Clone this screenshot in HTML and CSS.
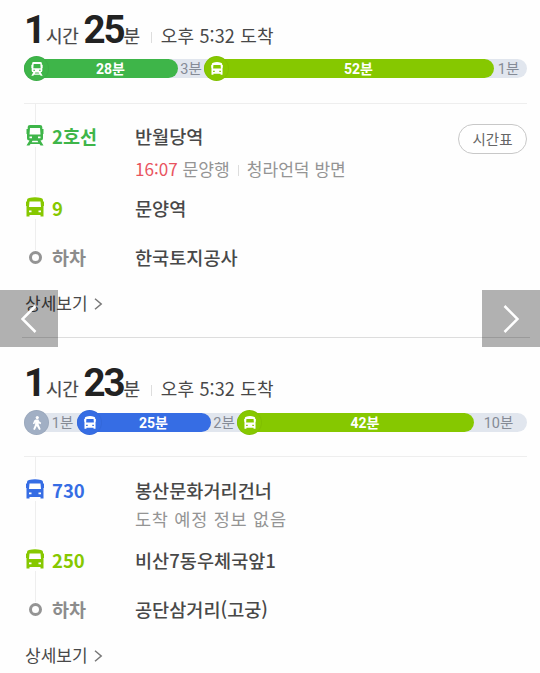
FILE: index.html
```html
<!DOCTYPE html>
<html lang="ko">
<head>
<meta charset="utf-8">
<title>대중교통 길찾기</title>
<link rel="stylesheet" href="styles.css">
</head>
<body>
<svg class="defs" aria-hidden="true">
  <symbol id="bus" viewBox="0 0 18 20"><path fill-rule="evenodd" d="M3 1Q9-.7 15 1Q17 1.500 17 3V4.500H18V9H17.500V19.500H14.500V18H3.500V19.500H.5V9H0V4.500H1V3Q1 1.500 3 1ZM3.500 4.500L3 10H15L14.500 4.500ZM3 13.500V15.300H5.500V13.500ZM12.500 13.500V15.300H15V13.500Z"/></symbol>
  <symbol id="train" viewBox="0 0 18 21"><path fill-rule="evenodd" d="M4 0H14Q16.300 0 16.300 2V4H17.500V9H17V13Q17 15.500 14.500 15.500L17.500 20.500H14.500L13.500 19H4.500L3.500 20.500H.5L3.500 15.500Q1 15.500 1 13V9H.5V4H1.700V2Q1.700 0 4 0ZM4 3L3.500 9.500H14.500L14 3ZM3.500 11.500V13.300H6V11.500ZM12 11.500V13.300H14.500V11.500ZM6.500 15.700L5.700 17.200H12.300L11.500 15.700Z"/></symbol>
  <symbol id="walk" viewBox="0 0 10 15"><circle cx="5.300" cy="1.700" r="1.700"/><path d="M3.500 3.700H6.500L7.500 6L9.500 7.300L8.800 8.800L6.800 7.800V9L9 14.200L7.300 15L4.800 10.800L2.700 15L.9 14.200L3 9.200V6.500L2.200 8.800L.6 8.300L2 4.800Z"/></symbol>
</svg>

<main class="routes">
  <section class="route">
    <h2 class="summary"><b class="num hour">1</b><span class="unit">시간</span><b class="num minute">25</b><span class="unit">분</span><i class="sep"></i><span class="arrival">오후 5:32 도착</span></h2>
    <div class="track first">
      <div class="seg ride subway"><span class="badge"><svg class="badge-train"><use href="#train"/></svg></span>28분</div>
      <div class="seg">3분</div>
      <div class="seg ride lime"><span class="badge"><svg><use href="#bus"/></svg></span>52분</div>
      <div class="seg last">1분</div>
    </div>
    <ol class="steps">
      <li class="step tall subway-text">
        <span class="icon"><svg class="train"><use href="#train"/></svg></span><strong class="line">2호선</strong>
        <div class="stop"><p class="name">반월당역</p><p class="info spaced"><em>16:07</em> 문양행<i class="sep small"></i>청라언덕 방면</p></div>
        <button class="timetable">시간표</button>
      </li>
      <li class="step lime-text">
        <span class="icon"><svg><use href="#bus"/></svg></span><strong class="line">9</strong>
        <div class="stop"><p class="name">문양역</p></div>
      </li>
      <li class="step end">
        <span class="icon"><span class="ring"></span></span><strong class="line">하차</strong>
        <div class="stop"><p class="name">한국토지공사</p></div>
      </li>
    </ol>
    <a class="detail">상세보기<svg viewBox="0 0 9 12"><path d="M1 .7L7.200 6L1 11.300"/></svg></a>
  </section>
  <hr class="divider">
  <section class="route">
    <h2 class="summary"><b class="num hour">1</b><span class="unit">시간</span><b class="num minute">23</b><span class="unit">분</span><i class="sep"></i><span class="arrival">오후 5:32 도착</span></h2>
    <div class="track second">
      <div class="seg walk"><span class="badge"><svg class="badge-walk"><use href="#walk"/></svg></span>1분</div>
      <div class="seg ride blue"><span class="badge"><svg><use href="#bus"/></svg></span>25분</div>
      <div class="seg">2분</div>
      <div class="seg ride lime"><span class="badge"><svg><use href="#bus"/></svg></span>42분</div>
      <div class="seg last">10분</div>
    </div>
    <ol class="steps low">
      <li class="step mid blue-text">
        <span class="icon"><svg><use href="#bus"/></svg></span><strong class="line">730</strong>
        <div class="stop"><p class="name">봉산문화거리건너</p><p class="info wide">도착 예정 정보 없음</p></div>
      </li>
      <li class="step lime-text">
        <span class="icon"><svg><use href="#bus"/></svg></span><strong class="line">250</strong>
        <div class="stop"><p class="name">비산7동우체국앞1</p></div>
      </li>
      <li class="step end">
        <span class="icon"><span class="ring"></span></span><strong class="line">하차</strong>
        <div class="stop"><p class="name">공단삼거리(고궁)</p></div>
      </li>
    </ol>
    <a class="detail">상세보기<svg viewBox="0 0 9 12"><path d="M1 .7L7.200 6L1 11.300"/></svg></a>
  </section>
</main>
<button class="nav prev" aria-label="이전"><svg viewBox="0 0 16 28"><path d="M14.500 1L1.500 14L14.500 27"/></svg></button>
<button class="nav next" aria-label="다음"><svg viewBox="0 0 16 28"><path d="M1.500 1L14.500 14L1.500 27"/></svg></button>
</body>
</html>
```
FILE: styles.css
```css
* { box-sizing: border-box; }
body {
  position: relative;
  height: 673px;
  margin: 0;
  overflow: hidden;
  background: #fefefe;
  color: #484848;
  font-family: "Noto Sans CJK KR", sans-serif;
}
h2, p, ol { margin: 0; padding: 0; }
button { padding: 0; font-family: inherit; }
svg { display: block; fill: currentColor; }
.defs { position: absolute; width: 0; height: 0; }
.route { padding: 0 13px 0 24px; }

.summary {
  display: flex;
  align-items: baseline;
  height: 59px;
  padding-top: 2px;
  line-height: 56px;
  font-size: 18px;
  font-weight: 400;
  white-space: nowrap;
}
.num {
  color: #222;
  font: bold 38.500px/56px Roboto, sans-serif;
  letter-spacing: -2px;
}
.hour { width: 22px; }
.minute { width: 40px; margin-left: 5px; }
.unit { letter-spacing: -0.3px; -webkit-text-stroke: 0.2px; }
.sep {
  display: inline-block;
  width: 1px;
  height: 11px;
  margin: 0 9px 0 11px;
  background: #ddd;
}
.sep.small { margin: 0 8px; }
.arrival { font-size: 18px; letter-spacing: 0.15px; }

.track {
  display: grid;
  height: 19px;
  margin-bottom: 25px;
  border-radius: 10px;
  background: #e1e6ee;
  color: #858b96;
  font: 14.5px/19px Roboto, "Noto Sans CJK KR", sans-serif;
}
.first { grid-template-columns: 154px 26px 290px 33px; }
.second {
  grid-template-columns: 53px 134px 26px 237px 53px;
  margin-top: 1px;
  margin-bottom: 24px;
}
.seg {
  position: relative;
  display: flex;
  align-items: center;
  justify-content: center;
  height: 19px;
  padding-top: 1px;
  white-space: nowrap;
}
.ride {
  padding-left: 19px;
  border-radius: 10px;
  color: #fff;
  font-size: 14px;
  font-weight: bold;
}
.walk { padding-left: 24px; }
.last { padding-right: 4px; }
.badge {
  position: absolute;
  top: -3px;
  left: 0;
  display: grid;
  place-items: center;
  width: 25px;
  height: 25px;
  border: 1px solid rgba(0, 0, 0, .04);
  border-radius: 50%;
  background: inherit;
  color: #fff;
}
.badge svg { width: 12px; height: 13px; }
.badge .badge-train { height: 14px; }
.badge .badge-walk { width: 10px; height: 14px; }
.subway { background: #3eb549; }
.lime { background: #86c800; }
.blue { background: #366de4; }
.walk .badge { background: #a1afc4; }

.steps {
  border-top: 1px solid #eee;
  padding-top: 18px;
  list-style: none;
  background: linear-gradient(#eee, #eee) 11px 0 / 1px calc(100% - 21px) no-repeat;
}
.steps.low { padding-top: 19px; }
.step {
  display: grid;
  grid-template-columns: 28px 83px 1fr auto;
  align-items: start;
  height: 49px;
  line-height: 28px;
}
.step.tall { height: 72px; }
.step.mid { height: 70px; }
.step.end { height: 28px; }
.icon {
  display: flex;
  align-items: center;
  justify-content: center;
  width: 22px;
  height: 24px;
  margin-top: 1px;
  background: #fefefe;
}
.icon svg { width: 18px; height: 20px; }
.icon .train { height: 21px; }
.ring {
  width: 13px;
  height: 13px;
  border: 3px solid #949494;
  border-radius: 50%;
}
.end .icon { height: 14px; margin-top: 7px; }
.line { font-size: 18.500px; font-weight: 700; }
.end .line { color: #8c8c8c; }
.subway-text .icon, .subway-text .line { color: #3eb549; }
.lime-text .icon, .lime-text .line { color: #86c800; }
.blue-text .icon, .blue-text .line { color: #366de4; }
.name { font-size: 18.600px; font-weight: 500; white-space: nowrap; }
.info { color: #949494; font-size: 17.500px; line-height: 30px; white-space: nowrap; }
.info.spaced { margin-top: 4px; font-size: 17.100px; }
.info.wide { letter-spacing: 0.75px; }
.info em { color: #e95460; font-style: normal; }
.timetable {
  width: 69px;
  height: 30px;
  margin-top: 2px;
  border: 1.500px solid #c8c8c8;
  border-radius: 15px;
  background: #fff;
  color: #666;
  font-size: 14.500px;
  line-height: 26px;
}
.detail {
  display: flex;
  align-items: center;
  height: 24px;
  margin-top: 20px;
  padding-left: 1px;
  font-size: 17px;
  line-height: 24px;
}
.detail svg {
  width: 9px;
  height: 12px;
  margin: 1px 0 0 6px;
  fill: none;
  stroke: #777;
  stroke-width: 1.500;
}
.divider { height: 1px; margin: 22px 10px 15px 22px; border: 0; background: #ddd; }

.nav {
  position: absolute;
  top: 290px;
  display: grid;
  place-items: center;
  width: 58px;
  height: 57px;
  border: 0;
  background: rgba(0, 0, 0, .3);
}
.prev { left: 0; }
.next { right: 0; }
.nav svg { width: 16px; height: 28px; fill: none; stroke: #fff; stroke-width: 2.500; }
```
